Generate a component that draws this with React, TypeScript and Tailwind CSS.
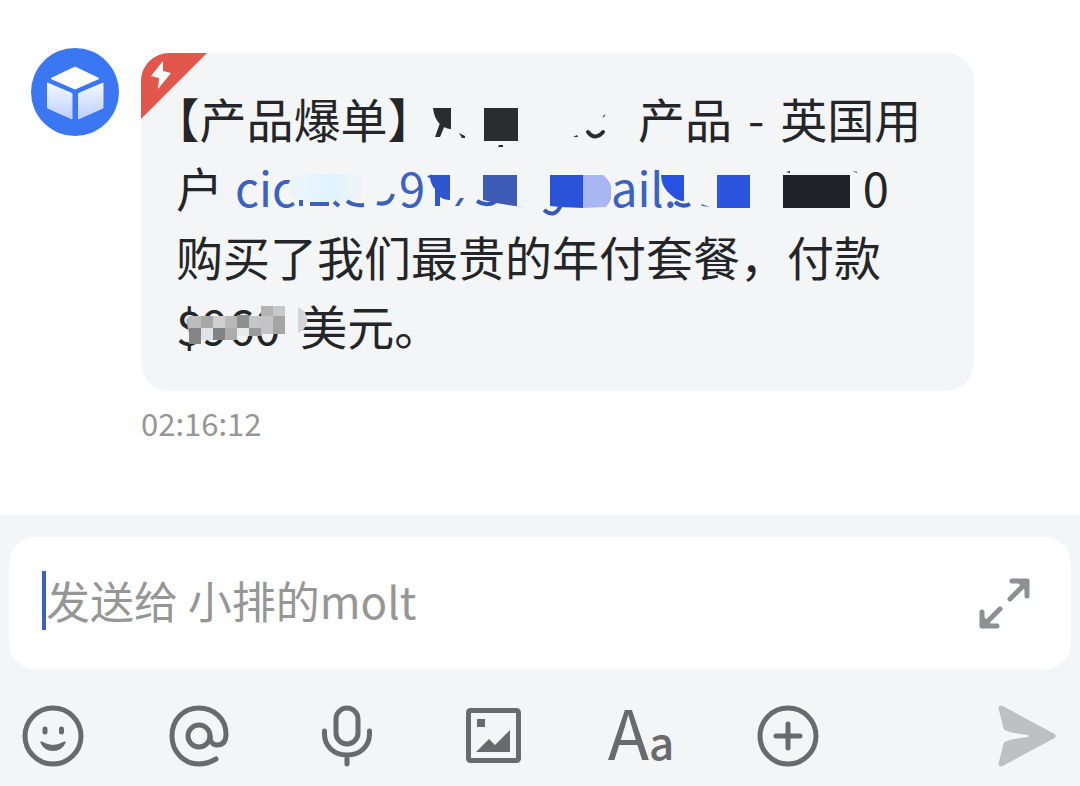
import type { ReactNode } from 'react';

// x, y, height, colour
const cells = [
  [189, 328, 16, '#858585'],
  [201, 328, 12, '#e2e3e5'],
  [213, 328, 12, '#828283'],
  [225, 328, 12, '#acacad'],
  [237, 328, 8, '#e8e9eb'],
  [249, 328, 8, '#9a9a9b'],
  [189, 316, 12, '#bcbcbd'],
  [201, 316, 12, '#a8a8a9'],
  [213, 316, 12, '#cfcfd0'],
  [225, 316, 12, '#b9b9ba'],
  [237, 315, 13, '#8f8f90'],
  [249, 316, 12, '#c6c6c8'],
  [261, 306, 10, '#b3b3b4'],
  [273, 306, 10, '#c8c8c9'],
  [261, 316, 18, '#c4c4c5'],
  [273, 316, 18, '#a5a5a6'],
] as const;

function Avatar() {
  return (
    <svg viewBox="0 0 88 88" className="size-[88px] shrink-0" aria-hidden="true">
      <defs>
        <linearGradient id="face" x1="0" y1="0" x2="0" y2="1">
          <stop offset="0" stopColor="#f4f8ff" />
          <stop offset="1" stopColor="#bccffd" />
        </linearGradient>
      </defs>
      <circle cx="44" cy="44" r="44" fill="#3b76f3" />
      <path d="M44 19L68 30.500 44 41 20 30.500z" fill="#fff" stroke="#fff" strokeLinejoin="round" />
      <path d="M16.500 35L41 45.500V71L16.500 60z" fill="url(#face)" stroke="url(#face)" strokeLinejoin="round" />
      <path d="M72 35L47.500 45.500V71L72 60z" fill="url(#face)" stroke="url(#face)" strokeLinejoin="round" />
    </svg>
  );
}

function UrgentCorner() {
  return (
    <svg viewBox="0 0 66 66" className="absolute left-0 top-0 size-[66px]" aria-hidden="true">
      <path d="M0 0h66L0 66z" fill="#e2574b" />
      <path d="M22 8L10 23l8 2-1 11 13-16-8-2z" fill="#fff" />
    </svg>
  );
}

function NameMask() {
  return (
    <svg viewBox="411 83 227 69" className="inline-block h-[69px] w-[227px] align-top" aria-hidden="true">
      <g fill="#2a2c2e">
        <path d="M433 108h18v21q-5 0-10-4-7-6-8-17z" />
        <path d="M440 123l5 2-5 12h-5zM459 133l6 3v2h-3z" />
        <path d="M484 108h34v33h-34zM499 145h4v2h-5zM573 137l4-2 1 2zM602 118l3-4v2z" />
      </g>
      <path d="M588 132q7 9 15 0" fill="none" stroke="#2a2c2e" strokeWidth="4" strokeLinecap="round" />
    </svg>
  );
}

function MailMaskStart() {
  return (
    <svg viewBox="287 152 113 69" className="relative -ml-[10px] inline-block h-[69px] w-[113px] align-top" aria-hidden="true">
      <defs>
        <linearGradient id="wash">
          <stop offset="0" stopColor="#eef5fa" />
          <stop offset="0.6" stopColor="#e0f2fd" />
          <stop offset="1" stopColor="#f3f5f7" />
        </linearGradient>
      </defs>
      <path d="M290 165h80v34h-78q-9-10 1-20z" fill="#f3f5f7" />
      <path d="M296 174h68v25q-34 6-68 0-10-14 0-25z" fill="url(#wash)" />
      <g fill="none" stroke="#3d60b8" strokeWidth="4">
        <path d="M302 200v6M311 204h19M335 202l5 4M348 201q6 5 17 4M378 203q13 3 16-9" />
      </g>
    </svg>
  );
}

function MailMaskMiddle() {
  return (
    <svg viewBox="426 152 186 69" className="inline-block h-[69px] w-[186px] align-top" aria-hidden="true">
      <path d="M428 177q2-3 7-2h16v25q-6 0-10-3v9h-5v-17q-4-4-5-11z" fill="#2f55cf" />
      <path d="M456 206l5-8h4l-5 8z" fill="#3d60b8" />
      <path d="M484 175h34v31l8 1-10-1-19-3-13-3z" fill="#3d5ab5" />
      <path d="M478 201q9 6 18 1M545 210q11 9 17-5" fill="none" stroke="#3659bd" strokeWidth="4" />
      <path d="M551 175h33v33l-22-1-11-1z" fill="#2b53da" />
      <path d="M584 175h20q9 7 9 17 0 8-6 15l-23 1z" fill="#a8b7f1" />
    </svg>
  );
}

function MailMaskEnd() {
  return (
    <svg viewBox="661 152 103 69" className="relative -ml-4 inline-block h-[69px] w-[103px] align-top" aria-hidden="true">
      <path d="M661 175h23v26q-7 0-13-6-10-8-10-20z" fill="#2852e4" />
      <path d="M675 202q7 6 15 2" fill="none" stroke="#3659bd" strokeWidth="4" />
      <path d="M701 204l9 3-8-1z" fill="#3d60b8" />
      <path d="M717 175h33v33h-33z" fill="#2b55de" />
    </svg>
  );
}

function CountMask() {
  return (
    <svg viewBox="764 152 99 69" className="inline-block h-[69px] w-[99px] align-top" aria-hidden="true">
      <path d="M783 175h67v33h-67zM786 172l4-1v2zM852 171l5 1v1z" fill="#202227" />
    </svg>
  );
}

function AmountMosaic() {
  return (
    <svg viewBox="176 290 136 69" className="absolute left-0 top-0 h-[69px] w-[136px]" aria-hidden="true">
      <path d="M186 320l4-4v22z" fill="#b0b0b1" />
      {cells.map(([x, y, height, fill]) => (
        <rect key={`${x}-${y}`} x={x} y={y} width="12" height={height} fill={fill} />
      ))}
      <path d="M298 307q10 5 9 14-1 9-9 12z" fill="#d3d4d6" />
    </svg>
  );
}

function ToolButton({ label, children }: { label: string; children: ReactNode }) {
  return (
    <button type="button" aria-label={label} className="flex size-[62px] shrink-0 items-center justify-center text-[#696a6e]">
      {children}
    </button>
  );
}

function Icon({ children }: { children: ReactNode }) {
  return (
    <svg viewBox="0 0 62 62" className="size-full" fill="none" stroke="currentColor" strokeWidth="5" strokeLinecap="round" strokeLinejoin="round" aria-hidden="true">
      {children}
    </svg>
  );
}

export default function App() {
  return (
    <main className="bg-white font-['Noto_Sans_CJK_SC',sans-serif] text-[#242528]">
      {/* Message */}
      <section className="flex gap-[22px] pb-[72px] pl-[31px] pr-[106px] pt-12">
        <Avatar />
        <div className="mt-[5px] min-w-0 flex-1">
          <div className="relative overflow-hidden rounded-[28px] bg-[#f3f5f7] pb-8 pl-[35px] pt-[30px]">
            <UrgentCorner />
            <p className="relative whitespace-nowrap text-[47px] leading-[69px]">
              <span className="block">
                <span className="[font-feature-settings:'halt']">【产品爆单】</span>
                <NameMask />
                产品<span className="px-4">-</span>英国用
              </span>
              <span className="block">
                户
                <a href="#mail" className="ml-3 text-[#3a62c0]">
                  cic
                  <MailMaskStart />9<MailMaskMiddle />
                  ail.
                  <MailMaskEnd />
                </a>
                <CountMask />0
              </span>
              <span className="block">购买了我们最贵的年付套餐，付款</span>
              <span className="relative block">
                <span className="mr-5">$960</span>
                美元。
                <AmountMosaic />
              </span>
            </p>
          </div>
          <time className="mt-3 block text-[31px] leading-10 text-[#969698]">02:16:12</time>
        </div>
      </section>

      {/* Composer */}
      <footer className="bg-[#f4f5f7] pb-[19px] pt-[22px]">
        <div className="mx-[9px] flex h-[132px] items-center rounded-[26px] bg-white pl-[33px] pr-10">
          <div className="flex min-w-0 flex-1 items-center pb-1.5">
            <span className="h-[59px] w-1 shrink-0 bg-[#3c5fc4]" />
            <input
              type="text"
              aria-label="消息"
              placeholder="发送给 小排的molt"
              className="h-16 min-w-0 flex-1 bg-transparent text-[44px] outline-none placeholder:text-[#969696]"
            />
          </div>
          <button type="button" aria-label="展开" className="size-[54px] shrink-0 text-[#8e9192]">
            <svg viewBox="977 575 54 54" className="size-full" fill="none" stroke="currentColor" strokeWidth="5" strokeLinecap="round" strokeLinejoin="round" aria-hidden="true">
              <path d="M1010 598l17-17M1012 580h15v15M1000 608l-17 17M982 611v14h15" />
              <path d="M1019 581h7v7zM983 617v7h7z" fill="currentColor" strokeWidth="3" />
            </svg>
          </button>
        </div>

        <div className="mt-9 flex items-center gap-[85px] pl-[22px] pr-[23px]">
          <ToolButton label="表情">
            <Icon>
              <circle cx="31" cy="31" r="28" />
              <path d="M23 24v3M39.500 24v3" />
              <path d="M18 37q1-1 3 0 10 6 20 0 2-1 3 0-4 9-13 9t-13-9z" fill="currentColor" stroke="none" />
            </Icon>
          </ToolButton>
          <ToolButton label="提及">
            <Icon>
              <circle cx="30" cy="31" r="11" />
              <path d="M41 31c0 5 2 9 7 9 6 0 9-4 9-11C57 14 45 3 30 3 14 3 3 15 3 31s12 28 27 28c6 0 12-2 17-5" />
            </Icon>
          </ToolButton>
          <ToolButton label="语音">
            <Icon>
              <rect x="20" y="3" width="22" height="36" rx="11" />
              <path d="M8.500 26v3c0 12 9 21 22.500 21s22.500-9 22.500-21v-3M31 50v9" />
            </Icon>
          </ToolButton>
          <ToolButton label="图片">
            <Icon>
              <rect x="5.500" y="5.500" width="50" height="50" rx="2" />
              <path d="M14 14h8v8h-8zM13 47l13-13 6 6 15-15v22z" fill="currentColor" stroke="none" />
            </Icon>
          </ToolButton>
          <ToolButton label="格式">
            <span className="text-[68px] leading-[62px]">
              A<span className="text-[44px] font-medium">a</span>
            </span>
          </ToolButton>
          <ToolButton label="更多">
            <Icon>
              <circle cx="31" cy="31" r="28" />
              <path d="M31 19v24M19 31h24" />
            </Icon>
          </ToolButton>
          <button type="button" aria-label="发送" className="ml-auto h-[62px] w-[60px] shrink-0 text-[#bfc0c1]">
            <svg viewBox="0 0 60 62" className="size-full" fill="currentColor" stroke="currentColor" strokeWidth="5" strokeLinejoin="round" aria-hidden="true">
              <path d="M4 3l52 28L4 59l5-20 22-8L9 23z" />
              <path d="M7 26.500l24 3.500q2 1 0 2L7 35.500z" fill="#f4f5f7" stroke="none" />
            </svg>
          </button>
        </div>
      </footer>
    </main>
  );
}
